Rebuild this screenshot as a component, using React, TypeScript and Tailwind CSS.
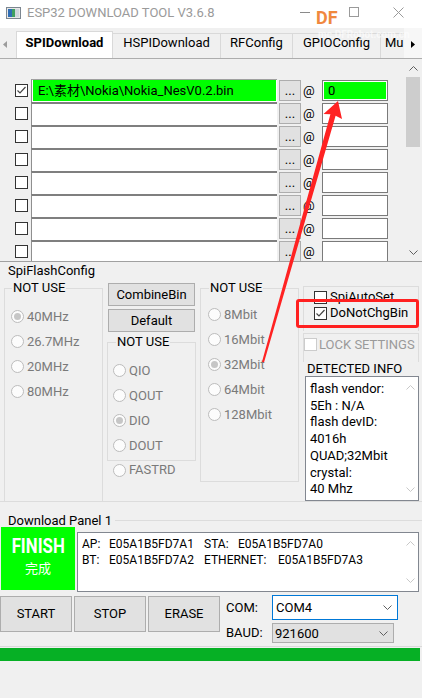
import React from 'react';

const FONT = "font-['Roboto','Noto_Sans_CJK_SC',sans-serif]";

const Chevron = ({ up = false, color = '#a0a0a0' }: { up?: boolean; color?: string }) => (
    <svg width="9" height="5" viewBox="0 0 9 5">
        <polyline
            points={up ? '0.5,4.5 4.5,0.5 8.5,4.5' : '0.5,0.5 4.5,4.5 8.5,0.5'}
            fill="none"
            stroke={color}
            strokeWidth="1"
        />
    </svg>
);

const Radio = ({ label, checked = false, rowClass = 'h-[25px]' }: { label: string; checked?: boolean; rowClass?: string }) => (
    <div className={`flex items-center ${rowClass}`}>
        <span className="w-[13px] h-[13px] rounded-full border border-[#bcbcbc] bg-[#fcfcfc] flex items-center justify-center shrink-0">
            {checked && <span className="w-[7px] h-[7px] rounded-full bg-[#c6c6c6]" />}
        </span>
        <span className="ml-[3px] text-[#7a7a7a] leading-[16px]">{label}</span>
    </div>
);

const Check = ({ checked = false, disabled = false }: { checked?: boolean; disabled?: boolean }) => (
    <span
        className={`w-[13px] h-[13px] border bg-white flex items-center justify-center shrink-0 ${
            disabled ? 'border-[#cccccc]' : 'border-[#333333]'
        }`}
    >
        {checked && (
            <svg width="11" height="11" viewBox="0 0 11 11">
                <polyline points="1.5,5.5 4,8 9.5,2" fill="none" stroke="#444" strokeWidth="1.2" />
            </svg>
        )}
    </span>
);

const Scrollbar = () => (
    <div className="w-[18px] h-full bg-[#f0f0f0] flex flex-col items-center">
        <div className="h-[17px] flex items-center justify-center pt-[2px]">
            <Chevron up color="#606060" />
        </div>
        <div className="w-[14px] h-[70px] bg-[#cdcdcd] mt-[1px]" />
        <div className="flex-1" />
        <div className="h-[18px] flex items-center justify-center">
            <Chevron color="#606060" />
        </div>
    </div>
);

const FileRow = ({ first }: { first: boolean }) => (
    <div className="flex h-[23px] items-center">
        <div className="w-[31px] pl-[15px] flex items-center">
            <Check checked={first} />
        </div>
        {first ? (
            <div className="w-[246px] h-[23px] border-l border-[#8f8f8f] border-t border-t-[#a0a0a0] bg-white pl-[1px] pb-[1px] pr-[1px]">
                <div className="h-full bg-[#00ff00] pl-[5px] flex items-center leading-[16px] whitespace-nowrap">
                    {'E:\\素材\\Nokia\\Nokia_NesV0.2.bin'}
                </div>
            </div>
        ) : (
            <div className="w-[246px] h-[23px] border-l border-[#8f8f8f] border-t-2 border-t-[#7f7f7f] bg-white" />
        )}
        <div className="ml-[2px] w-[22px] h-[21px] bg-[#e1e1e1] border border-[#adadad] flex items-end justify-center leading-[14px] pb-[2px]">
            ...
        </div>
        <div className="w-[21px] pl-[2px] leading-[16px]">@</div>
        <div className="w-[66px] h-[21px] border border-[#7a7a7a] bg-white p-px">
            {first && <div className="h-full bg-[#00ff00] pl-[4px] flex items-center leading-[16px]">0</div>}
        </div>
    </div>
);

export default function App() {
    return (
        <div className={`relative w-[422px] h-[698px] overflow-hidden bg-[#f0f0f0] text-[13px] text-black ${FONT}`}>
            {/* title bar */}
            <div className="h-[28px] bg-white flex items-start">
                <div className="pl-[6px] pt-[7px]">
                    <svg width="15" height="12" viewBox="0 0 15 12">
                        <rect x="0.5" y="0.5" width="14" height="11" fill="#e8e8e8" stroke="#7c8690" />
                        <rect x="2" y="2" width="4" height="8" fill="#2f6db5" />
                        <rect x="6" y="2" width="3" height="8" fill="#3fa060" />
                        <rect x="9" y="2" width="4" height="8" fill="#cfd6dc" />
                    </svg>
                </div>
                <div className="ml-[6px] pt-[5px] leading-[16px] text-[#9a9a9a] whitespace-nowrap">
                    ESP32 DOWNLOAD TOOL V3.6.8
                </div>
                <div className="ml-auto mr-px flex h-[24px]">
                    <div className="w-[45px] flex items-center justify-center">
                        <div className="w-[10px] h-px bg-[#8a8a8a] -ml-[8px]" />
                    </div>
                    <div className="w-[45px] flex items-center justify-center">
                        <div className="w-[10px] h-[10px] border border-[#9a9a9a]" />
                    </div>
                    <div className="w-[45px] flex items-center justify-center">
                        <svg width="11" height="11" viewBox="0 0 11 11">
                            <path d="M0.5 0.5 L10.5 10.5 M10.5 0.5 L0.5 10.5" stroke="#9a9a9a" strokeWidth="1" />
                        </svg>
                    </div>
                </div>
            </div>

            {/* tab strip */}
            <div className="flex h-[30px] items-end">
                <div className="w-[16px] h-full flex items-center pl-[3px] pt-[3px]">
                    <svg width="4" height="7" viewBox="0 0 4 7">
                        <polygon points="4,0 0,3.5 4,7" fill="#9c9c9c" />
                    </svg>
                </div>
                <div className="w-[97px] h-[27px] bg-white border border-b-0 border-[#d9d9d9] pt-[3px] text-center font-bold leading-[16px]">
                    SPIDownload
                </div>
                <div className="w-[108px] h-[25px] border-t border-r border-[#d9d9d9] pt-[1px] text-center leading-[16px]">
                    HSPIDownload
                </div>
                <div className="w-[72px] h-[25px] border-t border-r border-[#d9d9d9] pt-[1px] text-center leading-[16px]">
                    RFConfig
                </div>
                <div className="w-[88px] h-[25px] border-t border-r border-[#d9d9d9] pt-[1px] text-center leading-[16px]">
                    GPIOConfig
                </div>
                <div className="w-[23px] h-[25px] border-t border-[#d9d9d9] pt-[1px] pl-[4px] leading-[16px] overflow-hidden whitespace-nowrap">
                    Mu
                </div>
                <div className="flex-1 h-full flex items-center pl-[7px] pt-[3px] bg-[#f7f7f7]">
                    <svg width="4" height="7" viewBox="0 0 4 7">
                        <polygon points="0,0 4,3.5 0,7" fill="#000" />
                    </svg>
                </div>
            </div>

            {/* file list */}
            <div className="border-t border-[#adadad] flex h-[204px] border-b border-b-[#a0a0a0]">
                <div className="flex-1 pt-[20px] overflow-hidden">
                    {Array.from({ length: 8 }).map((_, i) => (
                        <FileRow key={i} first={i === 0} />
                    ))}
                </div>
                <Scrollbar />
            </div>

            {/* SpiFlashConfig */}
            <div className="h-[240px] border-b border-[#dcdcdc]">
                <div className="h-[17px] leading-[17px] pl-[8px]">SpiFlashConfig</div>
                <div className="flex items-start pl-[4px] gap-[4px]">
                    <fieldset className="w-[99px] h-[223px] border border-[#dcdcdc] pl-[6px]">
                        <legend className="ml-[1px] px-[1px] leading-[18px]">NOT USE</legend>
                        <div className="pt-[7px]">
                            <Radio label="40MHz" checked />
                            <Radio label="26.7MHz" />
                            <Radio label="20MHz" />
                            <Radio label="80MHz" />
                        </div>
                    </fieldset>

                    <div className="w-[89px] flex flex-col">
                        <div className="ml-px mt-[4px] w-[87px] h-[23px] bg-[#e1e1e1] border border-[#adadad] flex items-center justify-center leading-[16px]">
                            CombineBin
                        </div>
                        <div className="ml-px mt-[3px] w-[87px] h-[23px] bg-[#e1e1e1] border border-[#adadad] flex items-center justify-center leading-[16px]">
                            Default
                        </div>
                        <fieldset className="mt-px border border-[#dcdcdc] pl-[5px] pb-[2px]">
                            <legend className="ml-[3px] px-[1px] leading-[18px]">NOT USE</legend>
                            <div className="pt-[7px]">
                                <Radio label="QIO" />
                                <Radio label="QOUT" />
                                <Radio label="DIO" checked />
                                <Radio label="DOUT" />
                            </div>
                        </fieldset>
                        <div className="pl-[6px]">
                            <Radio label="FASTRD" rowClass="h-[18px]" />
                        </div>
                    </div>

                    <fieldset className="w-[99px] h-[203px] border border-[#dcdcdc] pl-[7px]">
                        <legend className="ml-[1px] px-[1px] leading-[18px]">NOT USE</legend>
                        <div className="pt-[5px]">
                            <Radio label="8Mbit" />
                            <Radio label="16Mbit" />
                            <Radio label="32Mbit" checked />
                            <Radio label="64Mbit" />
                            <Radio label="128Mbit" />
                        </div>
                    </fieldset>

                    <div className="w-[116px] flex flex-col">
                        <div className="mt-[7px] h-[45px] border-t border-l border-r border-[#dcdcdc] pt-[2px] pl-[10px]">
                            <div className="flex items-center h-[16px]">
                                <Check />
                                <span className="ml-[3px] leading-[16px]">SpiAutoSet</span>
                            </div>
                            <div className="flex items-center h-[16px]">
                                <Check checked />
                                <span className="ml-[3px] leading-[16px]">DoNotChgBin</span>
                            </div>
                        </div>
                        <div className="mt-[2px] h-[29px] border-t border-l border-r border-[#dcdcdc] pt-[4px]">
                            <div className="flex items-center h-[13px]">
                                <Check disabled />
                                <span className="ml-[2px] leading-[16px] text-[#9a9a9a]">LOCK SETTINGS</span>
                            </div>
                        </div>
                        <div className="h-[14px] leading-[14px] pl-[4px]">DETECTED INFO</div>
                        <div className="ml-[2px] h-[125px] border border-[#828790] bg-white flex">
                            <div className="flex-1 pt-[4px] pl-[4px] leading-[16.7px] whitespace-nowrap">
                                <div>flash vendor:</div>
                                <div>5Eh : N/A</div>
                                <div>flash devID:</div>
                                <div>4016h</div>
                                <div>QUAD;32Mbit</div>
                                <div>crystal:</div>
                                <div>40 Mhz</div>
                            </div>
                            <div className="w-[16px] flex flex-col items-center justify-between py-[8px]">
                                <Chevron up color="#c8c8c8" />
                                <Chevron color="#c8c8c8" />
                            </div>
                        </div>
                    </div>
                </div>
            </div>

            {/* Download panel */}
            <div className="pt-[12px]">
                <div className="h-[13px] flex items-center pl-[8px]">
                    <span className="leading-[13px]">Download Panel 1</span>
                    <div className="flex-1 h-px bg-[#dcdcdc] ml-[3px]" />
                </div>
                <div className="flex items-start h-[65px]">
                    <div className="ml-px w-[74px] h-[63px] bg-[#00ff00] text-white flex flex-col items-center pt-[8px]">
                        <div className="text-[21px] font-bold leading-[22px] scale-x-[0.8]">FINISH</div>
                        <div className="text-[13px] leading-[18px] mt-[3px]">完成</div>
                    </div>
                    <div className="ml-[2px] mt-[5px] w-[342px] h-[60px] border border-[#828790] bg-white flex text-[12px]">
                        <div className="flex-1 pl-[4px] pt-[3px] leading-[16px] whitespace-nowrap">
                            <div className="flex">
                                <span className="w-[27px]">AP:</span>
                                <span className="w-[95px]">E05A1B5FD7A1</span>
                                <span className="w-[34px]">STA:</span>
                                <span>E05A1B5FD7A0</span>
                            </div>
                            <div className="flex">
                                <span className="w-[27px]">BT:</span>
                                <span className="w-[95px]">E05A1B5FD7A2</span>
                                <span className="w-[74px]">ETHERNET:</span>
                                <span>E05A1B5FD7A3</span>
                            </div>
                        </div>
                        <div className="w-[16px] flex flex-col items-center justify-between py-[8px]">
                            <Chevron up color="#c8c8c8" />
                            <Chevron color="#c8c8c8" />
                        </div>
                    </div>
                </div>

                <div className="mt-[3px] h-[48px] flex items-start">
                    <div className="mt-px flex gap-[2px]">
                        {['START', 'STOP', 'ERASE'].map((b) => (
                            <div
                                key={b}
                                className="w-[72px] h-[36px] bg-[#e1e1e1] border border-[#adadad] flex items-center justify-center leading-[16px]"
                            >
                                {b}
                            </div>
                        ))}
                    </div>
                    <div className="ml-[6px] flex flex-col">
                        <div className="flex items-center h-[25px]">
                            <span className="w-[46px] leading-[16px]">COM:</span>
                            <div className="w-[126px] h-[25px] border border-[#0078d7] bg-white flex items-center justify-between pl-[3px] pr-[5px]">
                                <span className="leading-[16px]">COM4</span>
                                <Chevron color="#606060" />
                            </div>
                        </div>
                        <div className="mt-[3px] flex items-center h-[20px]">
                            <span className="w-[46px] leading-[16px]">BAUD:</span>
                            <div className="w-[122px] h-[20px] border border-[#adadad] bg-[#e1e1e1] flex items-center justify-between pl-[2px] pr-[5px]">
                                <span className="leading-[16px] pt-[2px]">921600</span>
                                <Chevron color="#606060" />
                            </div>
                        </div>
                    </div>
                </div>

                <div className="mt-[3px] border-t border-[#dadada] pt-px">
                    <div className="h-[13px] w-[420px] bg-[#06b025]" />
                </div>
            </div>

            {/* watermark */}
            <div className="absolute left-[316px] top-[8px] text-[18px] font-bold leading-[20px] text-[#f0883e]">DF</div>
            <div className="absolute left-[318px] top-[29px] text-[10px] font-bold leading-[12px] text-white/60">mc.DFRobot.com.cn</div>

            {/* annotations */}
            <div className="absolute left-[296px] top-[299px] w-[123px] h-[29px] border-[3px] border-[#ff2020] rounded-[3px]" />
            <svg className="absolute left-0 top-0 pointer-events-none" width="422" height="698" viewBox="0 0 422 698">
                <polygon
                    points="338,101 342,119 335.6,115.8 264,362.5 262,361.8 330.4,114.2 323.5,114"
                    fill="#ff2222"
                />
            </svg>
        </div>
    );
}
